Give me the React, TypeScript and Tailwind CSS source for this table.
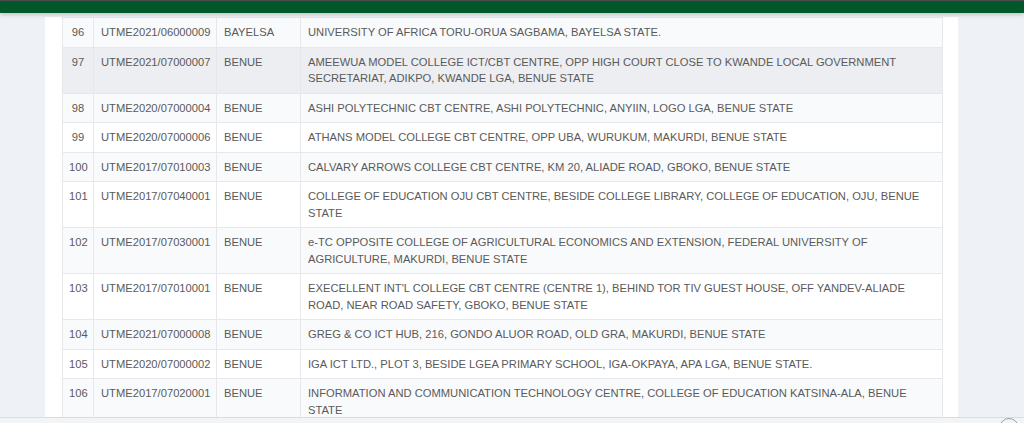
import React from "react";

type Row = { n: number; code: string; state: string; lines: string[] };

const rows: Row[] = [
  { n: 96, code: "UTME2021/06000009", state: "BAYELSA", lines: ["UNIVERSITY OF AFRICA TORU-ORUA SAGBAMA, BAYELSA STATE."] },
  { n: 97, code: "UTME2021/07000007", state: "BENUE", lines: ["AMEEWUA MODEL COLLEGE ICT/CBT CENTRE, OPP HIGH COURT CLOSE TO KWANDE LOCAL GOVERNMENT", "SECRETARIAT, ADIKPO, KWANDE LGA, BENUE STATE"] },
  { n: 98, code: "UTME2020/07000004", state: "BENUE", lines: ["ASHI POLYTECHNIC CBT CENTRE, ASHI POLYTECHNIC, ANYIIN, LOGO LGA, BENUE STATE"] },
  { n: 99, code: "UTME2020/07000006", state: "BENUE", lines: ["ATHANS MODEL COLLEGE CBT CENTRE, OPP UBA, WURUKUM, MAKURDI, BENUE STATE"] },
  { n: 100, code: "UTME2017/07010003", state: "BENUE", lines: ["CALVARY ARROWS COLLEGE CBT CENTRE, KM 20, ALIADE ROAD, GBOKO, BENUE STATE"] },
  { n: 101, code: "UTME2017/07040001", state: "BENUE", lines: ["COLLEGE OF EDUCATION OJU CBT CENTRE, BESIDE COLLEGE LIBRARY, COLLEGE OF EDUCATION, OJU, BENUE", "STATE"] },
  { n: 102, code: "UTME2017/07030001", state: "BENUE", lines: ["e-TC OPPOSITE COLLEGE OF AGRICULTURAL ECONOMICS AND EXTENSION, FEDERAL UNIVERSITY OF", "AGRICULTURE, MAKURDI, BENUE STATE"] },
  { n: 103, code: "UTME2017/07010001", state: "BENUE", lines: ["EXECELLENT INT'L COLLEGE CBT CENTRE (CENTRE 1), BEHIND TOR TIV GUEST HOUSE, OFF YANDEV-ALIADE", "ROAD, NEAR ROAD SAFETY, GBOKO, BENUE STATE"] },
  { n: 104, code: "UTME2021/07000008", state: "BENUE", lines: ["GREG & CO ICT HUB, 216, GONDO ALUOR ROAD, OLD GRA, MAKURDI, BENUE STATE"] },
  { n: 105, code: "UTME2020/07000002", state: "BENUE", lines: ["IGA ICT LTD., PLOT 3, BESIDE LGEA PRIMARY SCHOOL, IGA-OKPAYA, APA LGA, BENUE STATE."] },
  { n: 106, code: "UTME2017/07020001", state: "BENUE", lines: ["INFORMATION AND COMMUNICATION TECHNOLOGY CENTRE, COLLEGE OF EDUCATION KATSINA-ALA, BENUE", "STATE"] },
];

export default function App() {
  return (
    <div
      className="relative w-full h-[423px] overflow-hidden bg-[#eef1f5] text-[#5a5a5a]"
      style={{ fontFamily: '"Liberation Sans", Arial, sans-serif' }}
    >
      <div className="pl-[45px] pr-[66px] pt-[17px]">
        <div className="bg-white pl-[17px] pr-[16px] pb-[20px]">
          <table className="w-[880px] table-fixed border-collapse text-[11.2px] leading-[16.5px] text-[#5a5a5a]">
            <colgroup>
              <col className="w-[31px]" />
              <col className="w-[123px]" />
              <col className="w-[84px]" />
              <col className="w-[642px]" />
            </colgroup>
            <tbody>
              {rows.map((r) => {
                const bg = r.n === 97 ? "bg-[#eceef1]" : r.n % 2 === 0 ? "bg-[#f9fafc]" : "bg-white";
                return (
                  <tr key={r.n} className={bg}>
                    <td className="border border-[#e6e8eb] pl-[6px] pr-0 py-[6px] align-top text-[#5a5a5a]">
                      <div className="w-[18px] text-center">{r.n}</div>
                    </td>
                    <td className="border border-[#e6e8eb] px-[7px] py-[6px] align-top whitespace-nowrap text-[#5a5a5a]">{r.code}</td>
                    <td className="border border-[#e6e8eb] px-[7px] py-[6px] align-top text-[#5a5a5a]">{r.state}</td>
                    <td className="border border-[#e6e8eb] px-[7px] py-[6px] align-top text-[#5a5a5a]">
                      {r.lines.map((l, i) => (
                        <div key={i} className="whitespace-nowrap">{l}</div>
                      ))}
                    </td>
                  </tr>
                );
              })}
            </tbody>
          </table>
        </div>
      </div>

      {/* fixed header bar */}
      <div className="absolute top-0 left-0 right-0 h-[13px] border-t border-[#4d4d4d] bg-[#03582b] shadow-[0_2px_4px_rgba(0,0,0,0.18)]" />

      {/* bottom footer edge */}
      <div className="absolute left-0 right-0 top-[417px] h-[6px] border-t border-[#d9dce0] bg-[#f3f4f6]" />
      <div className="absolute left-[999px] top-[418px] w-[20px] h-[20px] rounded-full border border-[#9aa0a6] bg-[#f3f4f6]" />
    </div>
  );
}
